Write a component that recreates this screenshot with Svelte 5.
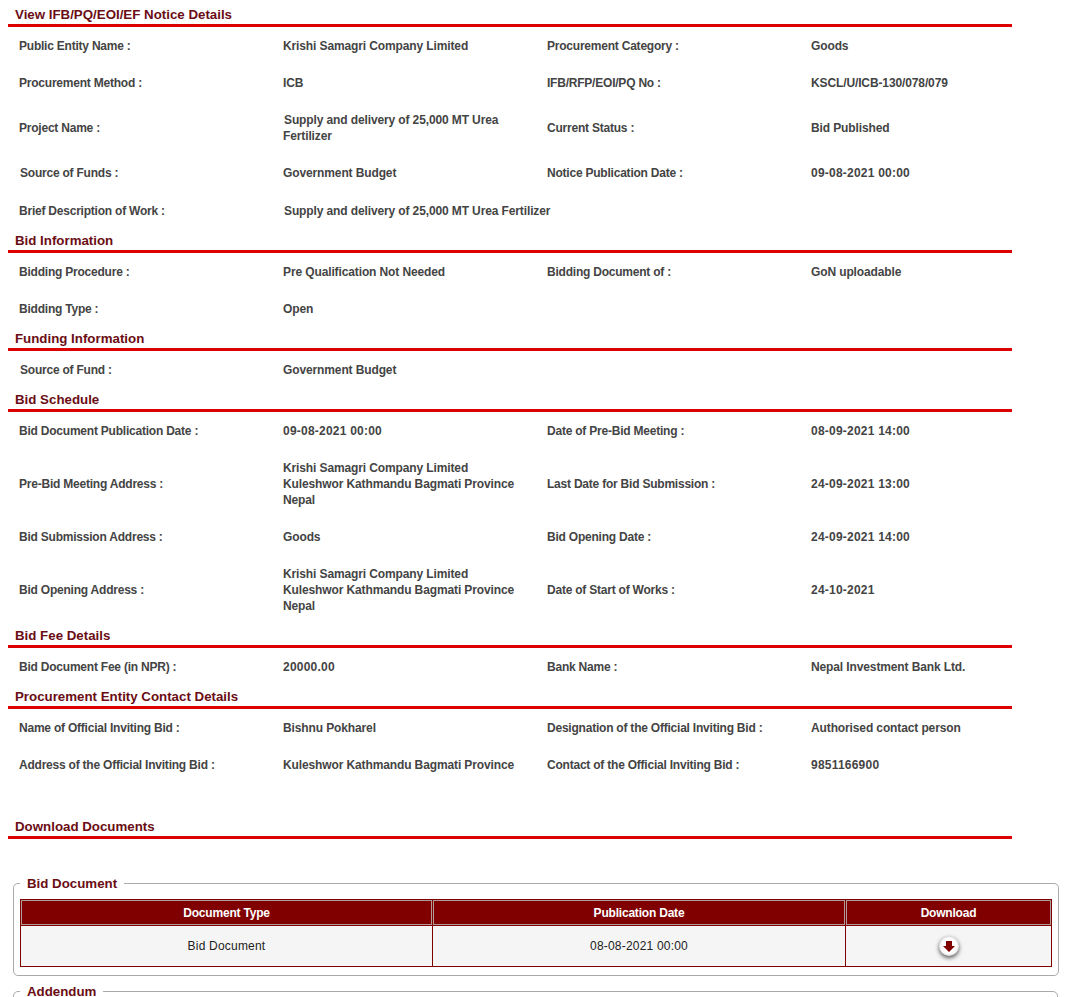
<script>
	const sections = [
		{
			title: 'View IFB/PQ/EOI/EF Notice Details',
			rows: [
				[['Public Entity Name :'], ['Krishi Samagri Company Limited'], ['Procurement Category :'], ['Goods']],
				[['Procurement Method :'], ['ICB'], ['IFB/RFP/EOI/PQ No :'], ['KSCL/U/ICB-130/078/079']],
				[['Project Name :'], ['Supply and delivery of 25,000 MT Urea', 'Fertilizer'], ['Current Status :'], ['Bid Published']],
				[['Source of Funds :'], ['Government Budget'], ['Notice Publication Date :'], ['09-08-2021 00:00']],
				[['Brief Description of Work :'], ['Supply and delivery of 25,000 MT Urea Fertilizer']]
			]
		},
		{
			title: 'Bid Information',
			rows: [
				[['Bidding Procedure :'], ['Pre Qualification Not Needed'], ['Bidding Document of :'], ['GoN uploadable']],
				[['Bidding Type :'], ['Open']]
			]
		},
		{
			title: 'Funding Information',
			rows: [[['Source of Fund :'], ['Government Budget']]]
		},
		{
			title: 'Bid Schedule',
			rows: [
				[['Bid Document Publication Date :'], ['09-08-2021 00:00'], ['Date of Pre-Bid Meeting :'], ['08-09-2021 14:00']],
				[['Pre-Bid Meeting Address :'], ['Krishi Samagri Company Limited', 'Kuleshwor Kathmandu Bagmati Province', 'Nepal'], ['Last Date for Bid Submission :'], ['24-09-2021 13:00']],
				[['Bid Submission Address :'], ['Goods'], ['Bid Opening Date :'], ['24-09-2021 14:00']],
				[['Bid Opening Address :'], ['Krishi Samagri Company Limited', 'Kuleshwor Kathmandu Bagmati Province', 'Nepal'], ['Date of Start of Works :'], ['24-10-2021']]
			]
		},
		{
			title: 'Bid Fee Details',
			rows: [[['Bid Document Fee (in NPR) :'], ['20000.00'], ['Bank Name :'], ['Nepal Investment Bank Ltd.']]]
		},
		{
			title: 'Procurement Entity Contact Details',
			rows: [
				[['Name of Official Inviting Bid :'], ['Bishnu Pokharel'], ['Designation of the Official Inviting Bid :'], ['Authorised contact person']],
				[['Address of the Official Inviting Bid :'], ['Kuleshwor Kathmandu Bagmati Province'], ['Contact of the Official Inviting Bid :'], ['9851166900']]
			]
		}
	];

	const nudged = (line) => line.startsWith('Source of Fund') || line.startsWith('Supply and');
	const numeric = (line) => /^[\d.\-: ]+$/.test(line);
	const isWide = (row) => row.length === 2 && row[1][0].length > 40;
</script>

<div class="page">
	{#each sections as section}
		<h2 class="heading">{section.title}</h2>
		<div class="fields">
			{#each section.rows as row}
				{#each row as cell, i}
					<div class="cell" class:label={i % 2 === 0} class:wide={isWide(row) && i === 1}>
						{#each cell as line}
							<div class:nudged={nudged(line)} class:numeric={numeric(line)}>{line}</div>
						{/each}
					</div>
				{/each}
				{#if row.length === 2 && !isWide(row)}
					<div class="filler"></div>
				{/if}
			{/each}
		</div>
	{/each}

	<h2 class="heading downloads">Download Documents</h2>

	<fieldset class="group">
		<legend>Bid Document</legend>
		<table>
			<thead>
				<tr>
					<th class="type">Document Type</th>
					<th class="date">Publication Date</th>
					<th>Download</th>
				</tr>
			</thead>
			<tbody>
				<tr>
					<td>Bid Document</td>
					<td>08-08-2021 00:00</td>
					<td>
						<span class="download">
							<svg viewBox="0 0 12 11" width="12" height="11">
								<path d="M3 0h6v5h3l-6 6-6-6h3z" fill="#800000" />
							</svg>
						</span>
					</td>
				</tr>
			</tbody>
		</table>
	</fieldset>

	<fieldset class="group">
		<legend>Addendum</legend>
		<div class="empty"></div>
	</fieldset>
</div>

<style>
	:global(body) {
		background: #fff;
	}

	.page {
		height: 997px;
		overflow: hidden;
		font-family: 'Liberation Sans', Arial, sans-serif;
		box-sizing: border-box;
		padding: 3px 0 0 8px;
	}

	.heading {
		width: 1004px;
		box-sizing: border-box;
		margin: 0;
		height: 24px;
		padding: 4px 0 0 7px;
		border-bottom: 3px solid #dd0000;
		font-size: 13.3px;
		line-height: 15px;
		font-weight: bold;
		color: #6b0d14;
	}

	.fields {
		display: grid;
		grid-template-columns: repeat(4, 264px);
		align-items: center;
		font-size: 12px;
		line-height: 16px;
		font-weight: bold;
		color: #444;
		letter-spacing: -0.12px;
	}

	.cell {
		padding: 11px 0 10px 11px;
	}

	.label {
		letter-spacing: -0.22px;
	}

	.wide {
		grid-column: span 3;
		padding-top: 12px;
	}

	.filler {
		grid-column: span 2;
	}

	.nudged {
		padding-left: 1px;
	}

	.numeric {
		letter-spacing: 0.22px;
	}

	.downloads {
		margin-top: 32px;
	}

	.group {
		width: 1045px;
		box-sizing: border-box;
		margin: 37px 0 0 5px;
		padding: 8px 6px 8px 6px;
		border: 1px solid #aaa;
		border-radius: 5px;
	}

	.group + .group {
		margin-top: 8px;
	}

	legend {
		padding: 0 7px;
		font-size: 13.3px;
		line-height: 15px;
		font-weight: bold;
		color: #6b0d14;
	}

	table {
		width: 1032px;
		border-collapse: collapse;
		table-layout: fixed;
		font-size: 12px;
	}

	th {
		height: 25px;
		padding: 0;
		background: #800000;
		border: 1px solid #800000;
		box-shadow: inset 0 0 0 1px #b09a9a;
		color: #fff;
		font-weight: bold;
		letter-spacing: -0.2px;
	}

	.type {
		width: 411px;
	}

	.date {
		width: 412px;
	}

	td {
		height: 40px;
		padding: 0;
		background: #f5f5f5;
		border: 1px solid #800000;
		color: #222;
		text-align: center;
		letter-spacing: 0.2px;
	}

	.download {
		display: inline-flex;
		align-items: center;
		justify-content: center;
		width: 20px;
		height: 20px;
		border-radius: 50%;
		background: #fff;
		box-shadow: 0 2px 4px rgba(0, 0, 0, 0.65), inset 0 0 3px rgba(0, 0, 0, 0.25);
		vertical-align: middle;
	}

	.empty {
		height: 60px;
	}
</style>
